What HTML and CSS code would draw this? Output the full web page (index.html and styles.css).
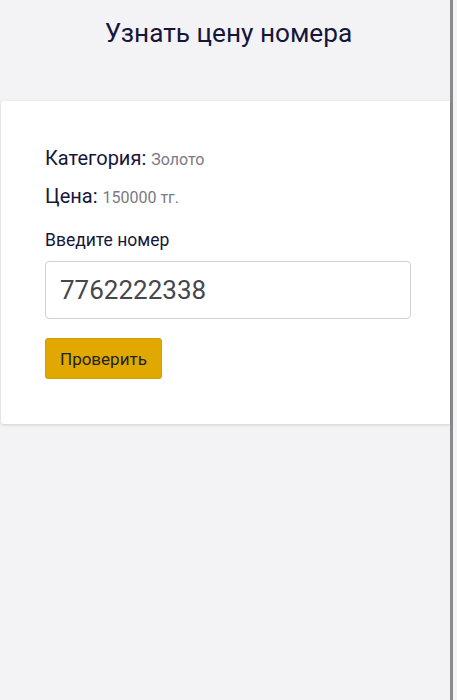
FILE: index.html
```html
<!DOCTYPE html>
<html lang="ru">
<head>
  <meta charset="UTF-8">
  <meta name="viewport" content="width=device-width, initial-scale=1.0">
  <title>Узнать цену номера</title>
  <link rel="stylesheet" href="styles.css">
</head>
<body>
  <div class="page">
    <h1 class="page-title">Узнать цену номера</h1>

    <!-- Price check card -->
    <div class="card">
      <p class="info-row">Категория: <span class="info-value">Золото</span></p>
      <p class="info-row">Цена: <span class="info-value">150000 тг.</span></p>

      <label class="field-label" for="number">Введите номер</label>
      <input class="field-input" id="number" type="text" value="7762222338">

      <button class="check-button" type="button">Проверить</button>
    </div>
  </div>
</body>
</html>
```

FILE: styles.css
```css
html, body {
  height: 100%;
}

body {
  font-family: Roboto, "Noto Sans", sans-serif;
  margin: 0;
  padding: 0;
  background-color: #f3f3f6;
  color: #16163a;
}

.page {
  width: 453px;
  min-height: 100%;
  border-right: 3px solid #8a8a8a;
  box-sizing: border-box;
  padding-top: 16px;
}

.page-title {
  margin: 0 0 51px;
  padding-left: 7px;
  font-size: 26.2px;
  font-weight: 400;
  line-height: 34px;
  text-align: center;
}

.card {
  margin-left: 1px;
  padding: 44px 39px 45px 44px;
  background: #fff;
  border-radius: 3px 0 0 3px;
  box-shadow: 0 1px 3px rgba(0, 0, 0, 0.15);
}

.info-row {
  margin: 0 0 10px;
  font-size: 20px;
  line-height: 27px;
}

.info-row + .info-row {
  margin-bottom: 17px;
}

.info-value {
  font-size: 16px;
  color: #7a7a82;
}

.field-label {
  display: block;
  margin-bottom: 9px;
  font-size: 17.5px;
  line-height: 24px;
}

.field-input {
  display: block;
  width: 100%;
  height: 58px;
  box-sizing: border-box;
  padding: 0 14px;
  font-family: Roboto, "Noto Sans", sans-serif;
  font-size: 26px;
  color: #46464c;
  background: #fff;
  border: 1px solid #cfcfd4;
  border-radius: 4px;
  outline: none;
}

.check-button {
  display: inline-block;
  margin-top: 19px;
  height: 41px;
  padding: 0 14px;
  font-family: Roboto, "Noto Sans", sans-serif;
  font-size: 17px;
  color: #222;
  background-color: #e0a800;
  border: 1px solid #d39e00;
  border-radius: 3px;
}
```
